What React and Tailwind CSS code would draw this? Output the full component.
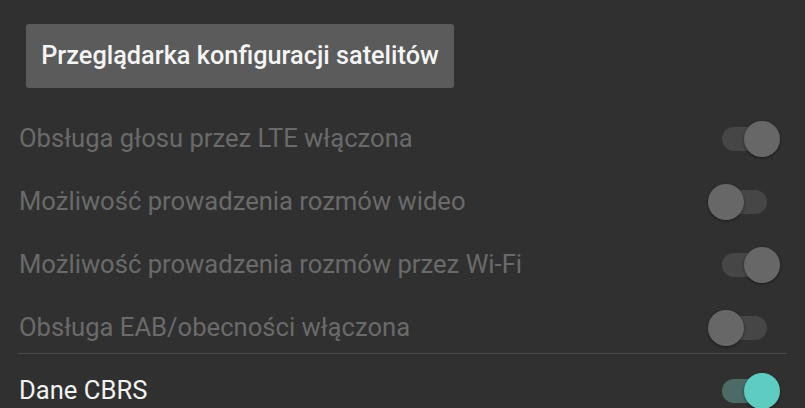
const rows = [
  { label: 'Obsługa głosu przez LTE włączona', on: true, enabled: false },
  { label: 'Możliwość prowadzenia rozmów wideo', on: false, enabled: false },
  { label: 'Możliwość prowadzenia rozmów przez Wi-Fi', on: true, enabled: false },
  { label: 'Obsługa EAB/obecności włączona', on: false, enabled: false },
]

function Toggle({ on, enabled }) {
  const track = enabled ? 'bg-[#4c6b67]' : 'bg-[#464646]'
  const thumb = enabled ? 'bg-[#5fccc2]' : 'bg-[#676767]'
  return (
    <div className="relative w-[72px] h-[36px] flex-shrink-0">
      <div className={`absolute left-[14px] top-[6px] w-[45px] h-[24px] rounded-full ${track}`} />
      <div
        className={`absolute top-0 w-[36px] h-[36px] rounded-full shadow-[0_1px_3px_rgba(0,0,0,0.45)] ${thumb} ${on ? 'left-[36px]' : 'left-0'}`}
      />
    </div>
  )
}

function Row({ label, on, enabled, className = '' }) {
  return (
    <div className={`flex items-center justify-between pl-[19px] pr-[25px] ${className}`}>
      <span className={`text-[25.6px] leading-none ${enabled ? 'text-[#f2f2f2]' : 'text-[#6a6a6a]'}`}>{label}</span>
      <Toggle on={on} enabled={enabled} />
    </div>
  )
}

export default function App() {
  return (
    <div
      className="w-[805px] h-[408px] overflow-hidden bg-[#303030]"
      style={{ fontFamily: 'Roboto, "Noto Sans", sans-serif' }}
    >
      <div className="pt-[24px] pl-[26px]">
        <button
          type="button"
          className="h-[64px] w-[428px] rounded-[3px] bg-[#5b5b5c] text-[#f5f5f5] text-[25.3px] leading-none font-medium"
        >
          Przeglądarka konfiguracji satelitów
        </button>
      </div>

      <div className="mt-[19px]">
        {rows.slice(0, 3).map((r) => (
          <Row key={r.label} {...r} className="h-[63px]" />
        ))}
        <Row {...rows[3]} className="h-[57px] pt-[6px]" />
        <div className="ml-[18px] mr-[18px] h-px bg-[#4a4a4a]" />
        <Row label="Dane CBRS" on enabled className="h-[74px]" />
      </div>
    </div>
  )
}
